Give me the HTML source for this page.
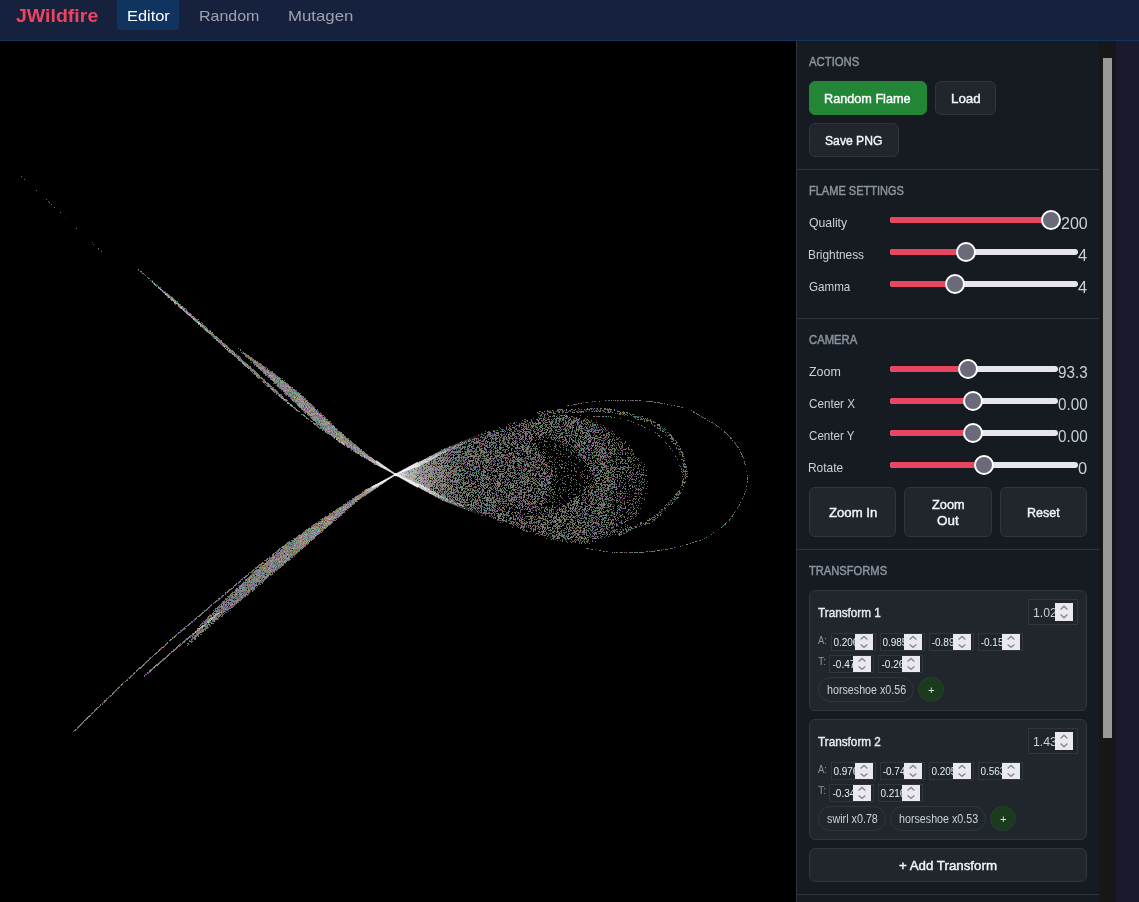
<!DOCTYPE html>
<html lang="en"><head><meta charset="utf-8"><title>JWildfire</title>
<style>
*{box-sizing:border-box;margin:0;padding:0}
html,body{width:1139px;height:902px;overflow:hidden;background:#1a1a2e;font-family:"Liberation Sans",sans-serif}
.abs{position:absolute}
#root{position:absolute;left:0;top:0;width:1139px;height:902px;overflow:hidden;will-change:transform}
#hdr{position:absolute;left:0;top:0;width:1139px;height:41px;background:#16213e;border-bottom:1px solid #0f3460}
#cv{position:absolute;left:0;top:41px;width:796px;height:861px;background:#000;overflow:hidden}
#panel{position:absolute;left:796px;top:41px;width:320px;height:861px;background:#161b22;border-left:1px solid #30363d;overflow:hidden}
#sbar{position:absolute;left:1099px;top:41px;width:17px;height:861px;background:#171717}
#sthumb{position:absolute;left:1103px;top:58px;width:9px;height:680px;background:#999}
.t{position:absolute;white-space:nowrap;line-height:1;transform-origin:0 0}
.hr{position:absolute;left:797px;width:302px;height:1px;background:#30363d}
.btn{position:absolute;background:#21262d;border:1px solid #30363d;border-radius:6px}
.card{position:absolute;left:809px;width:278px;height:121px;background:#21262d;border:1px solid #30363d;border-radius:6px}
.inp{position:absolute;border:1px solid #30363d;background:#20252c;overflow:hidden}
.spin{position:absolute;background:#eae9ef}
.chip{position:absolute;border:1px solid #30363d;border-radius:13px;background:#21262d}
.plus{position:absolute;border-radius:13px;background:#1b3a1e;border:1px solid #21422a}
.trk{position:absolute;height:6px;border-radius:3px}
.thumb{position:absolute;width:20px;height:20px;border-radius:10px;background:#6a6a7a;border:2px solid #fff}
</style></head>
<body>
<div id="root">
<div id="hdr"></div>
<div class="abs" style="left:117px;top:-2px;width:62px;height:32px;background:#0f3460;border-radius:4px"></div>
<span class="t" id="t0" style="left:15.56px;top:7.26px;font-size:18px;color:#e94560;font-weight:700;transform:scaleX(1.0841);">JWildfire</span>
<span class="t" id="t1" style="left:126.63px;top:8.10px;font-size:15px;color:#ffffff;font-weight:400;transform:scaleX(1.0926);">Editor</span>
<span class="t" id="t2" style="left:198.62px;top:8.10px;font-size:15px;color:#a0a0b0;font-weight:400;transform:scaleX(1.0660);">Random</span>
<span class="t" id="t3" style="left:287.89px;top:8.10px;font-size:15px;color:#a0a0b0;font-weight:400;transform:scaleX(1.1201);">Mutagen</span>
<div id="cv"><svg width="796" height="861" viewBox="0 41 796 861" style="position:absolute;left:0;top:0;display:block">
<defs>
<linearGradient id="bg" gradientUnits="userSpaceOnUse" x1="396" y1="0" x2="652" y2="0">
<stop offset="0" stop-color="#bcbcbc"/><stop offset="0.1" stop-color="#a0a0a0"/><stop offset="0.3" stop-color="#878787"/><stop offset="0.78" stop-color="#828282"/><stop offset="0.87" stop-color="#777777"/><stop offset="1" stop-color="#6b6b6b"/></linearGradient>
<linearGradient id="tu" gradientUnits="userSpaceOnUse" x1="396" y1="474.5" x2="360" y2="450">
<stop offset="0" stop-color="#fff"/><stop offset="0.4" stop-color="#ccc" stop-opacity="0.8"/><stop offset="1" stop-color="#999" stop-opacity="0"/></linearGradient>
<linearGradient id="tl" gradientUnits="userSpaceOnUse" x1="396" y1="474.5" x2="360" y2="497">
<stop offset="0" stop-color="#fff"/><stop offset="0.4" stop-color="#ccc" stop-opacity="0.8"/><stop offset="1" stop-color="#999" stop-opacity="0"/></linearGradient>
<linearGradient id="wu" gradientUnits="userSpaceOnUse" x1="396" y1="474.5" x2="231" y2="343">
<stop offset="0" stop-color="#e6e6e6"/><stop offset="0.3" stop-color="#d7d7d7"/><stop offset="1" stop-color="#c8c8c8"/></linearGradient>
<linearGradient id="wl" gradientUnits="userSpaceOnUse" x1="396" y1="474.5" x2="180" y2="653">
<stop offset="0" stop-color="#e0e0e0"/><stop offset="0.45" stop-color="#c8c8c8"/><stop offset="0.75" stop-color="#aaaaaa"/><stop offset="1" stop-color="#9a9a9a"/></linearGradient>
<radialGradient id="ap" gradientUnits="userSpaceOnUse" cx="396" cy="474.5" r="60">
<stop offset="0" stop-color="#fff" stop-opacity="0.95"/><stop offset="0.2" stop-color="#ddd" stop-opacity="0.5"/><stop offset="0.6" stop-color="#bbb" stop-opacity="0.18"/><stop offset="1" stop-color="#aaa" stop-opacity="0"/></radialGradient>
<linearGradient id="eu" gradientUnits="userSpaceOnUse" x1="396" y1="474.5" x2="485" y2="431.6">
<stop offset="0" stop-color="#fff" stop-opacity="1"/><stop offset="0.35" stop-color="#ddd" stop-opacity="0.75"/><stop offset="1" stop-color="#bbb" stop-opacity="0"/></linearGradient>
<linearGradient id="el" gradientUnits="userSpaceOnUse" x1="396" y1="474.5" x2="485" y2="519">
<stop offset="0" stop-color="#fff" stop-opacity="1"/><stop offset="0.35" stop-color="#ddd" stop-opacity="0.75"/><stop offset="1" stop-color="#bbb" stop-opacity="0"/></linearGradient>
<filter id="sp" filterUnits="userSpaceOnUse" x="0" y="41" width="796" height="861" color-interpolation-filters="sRGB">
<feGaussianBlur in="SourceGraphic" stdDeviation="1.9" result="d"/>
<feTurbulence type="fractalNoise" baseFrequency="1.37 1.73" numOctaves="1" seed="3" result="n"/>
<feColorMatrix in="n" type="matrix" values="1 0 0 0 0  1 0 0 0 0  1 0 0 0 0  0 0 0 0 1" result="n1"/>
<feComposite in="d" in2="n1" operator="arithmetic" k1="0" k2="1" k3="1" k4="-1" result="s"/>
<feComponentTransfer in="s" result="s2"><feFuncR type="table" tableValues="0 0.45 0.463 0.476 0.49 0.503 0.516 0.529 0.542 0.555 0.569 0.582 0.595 0.608 0.621 0.635 0.648 0.661 0.674 0.687 0.7 0.714 0.727 0.74 0.74 0.74 0.74 0.74 0.74 0.74 0.74 0.74 0.74 0.74 0.74 0.74 0.74 0.74 0.74 0.74 0.74"/><feFuncG type="table" tableValues="0 0.45 0.463 0.476 0.49 0.503 0.516 0.529 0.542 0.555 0.569 0.582 0.595 0.608 0.621 0.635 0.648 0.661 0.674 0.687 0.7 0.714 0.727 0.74 0.74 0.74 0.74 0.74 0.74 0.74 0.74 0.74 0.74 0.74 0.74 0.74 0.74 0.74 0.74 0.74 0.74"/><feFuncB type="table" tableValues="0 0.45 0.463 0.476 0.49 0.503 0.516 0.529 0.542 0.555 0.569 0.582 0.595 0.608 0.621 0.635 0.648 0.661 0.674 0.687 0.7 0.714 0.727 0.74 0.74 0.74 0.74 0.74 0.74 0.74 0.74 0.74 0.74 0.74 0.74 0.74 0.74 0.74 0.74 0.74 0.74"/></feComponentTransfer>
<feTurbulence type="fractalNoise" baseFrequency="0.93 1.21" numOctaves="1" seed="11" result="c"/>
<feColorMatrix in="c" type="matrix" values="2.8 0 0 0 -0.4  0 2.8 0 0 -0.4  0 0 2.8 0 -0.43000000000000005  0 0 0 0 1" result="c1"/>
<feComposite in="s2" in2="c1" operator="arithmetic" k1="1" k2="0" k3="0" k4="0"/>
</filter>
<filter id="sp2" filterUnits="userSpaceOnUse" x="0" y="41" width="796" height="861" color-interpolation-filters="sRGB">
<feTurbulence type="fractalNoise" baseFrequency="1.37 1.73" numOctaves="1" seed="8" result="n"/>
<feColorMatrix in="n" type="matrix" values="1 0 0 0 0  1 0 0 0 0  1 0 0 0 0  0 0 0 0 1" result="n1"/>
<feComposite in="SourceGraphic" in2="n1" operator="arithmetic" k1="0" k2="1" k3="1" k4="-1" result="s"/>
<feComponentTransfer in="s" result="s2"><feFuncR type="table" tableValues="0 0.45 0.463 0.476 0.49 0.503 0.516 0.529 0.542 0.555 0.569 0.582 0.595 0.608 0.621 0.635 0.648 0.661 0.674 0.687 0.7 0.714 0.727 0.74 0.74 0.74 0.74 0.74 0.74 0.74 0.74 0.74 0.74 0.74 0.74 0.74 0.74 0.74 0.74 0.74 0.74"/><feFuncG type="table" tableValues="0 0.45 0.463 0.476 0.49 0.503 0.516 0.529 0.542 0.555 0.569 0.582 0.595 0.608 0.621 0.635 0.648 0.661 0.674 0.687 0.7 0.714 0.727 0.74 0.74 0.74 0.74 0.74 0.74 0.74 0.74 0.74 0.74 0.74 0.74 0.74 0.74 0.74 0.74 0.74 0.74"/><feFuncB type="table" tableValues="0 0.45 0.463 0.476 0.49 0.503 0.516 0.529 0.542 0.555 0.569 0.582 0.595 0.608 0.621 0.635 0.648 0.661 0.674 0.687 0.7 0.714 0.727 0.74 0.74 0.74 0.74 0.74 0.74 0.74 0.74 0.74 0.74 0.74 0.74 0.74 0.74 0.74 0.74 0.74 0.74"/></feComponentTransfer>
<feTurbulence type="fractalNoise" baseFrequency="0.93 1.21" numOctaves="1" seed="5" result="c"/>
<feColorMatrix in="c" type="matrix" values="2.8 0 0 0 -0.4  0 2.8 0 0 -0.4  0 0 2.8 0 -0.43000000000000005  0 0 0 0 1" result="c1"/>
<feComposite in="s2" in2="c1" operator="arithmetic" k1="1" k2="0" k3="0" k4="0"/>
</filter>
<filter id="sp3" filterUnits="userSpaceOnUse" x="0" y="41" width="796" height="861" color-interpolation-filters="sRGB">
<feGaussianBlur in="SourceGraphic" stdDeviation="1.1" result="d"/>
<feTurbulence type="fractalNoise" baseFrequency="1.37 1.73" numOctaves="1" seed="21" result="n"/>
<feColorMatrix in="n" type="matrix" values="1 0 0 0 0  1 0 0 0 0  1 0 0 0 0  0 0 0 0 1" result="n1"/>
<feComposite in="d" in2="n1" operator="arithmetic" k1="0" k2="1" k3="1" k4="-1" result="s"/>
<feComponentTransfer in="s" result="s2"><feFuncR type="table" tableValues="0 0.45 0.463 0.476 0.49 0.503 0.516 0.529 0.542 0.555 0.569 0.582 0.595 0.608 0.621 0.635 0.648 0.661 0.674 0.687 0.7 0.714 0.727 0.74 0.74 0.74 0.74 0.74 0.74 0.74 0.74 0.74 0.74 0.74 0.74 0.74 0.74 0.74 0.74 0.74 0.74"/><feFuncG type="table" tableValues="0 0.45 0.463 0.476 0.49 0.503 0.516 0.529 0.542 0.555 0.569 0.582 0.595 0.608 0.621 0.635 0.648 0.661 0.674 0.687 0.7 0.714 0.727 0.74 0.74 0.74 0.74 0.74 0.74 0.74 0.74 0.74 0.74 0.74 0.74 0.74 0.74 0.74 0.74 0.74 0.74"/><feFuncB type="table" tableValues="0 0.45 0.463 0.476 0.49 0.503 0.516 0.529 0.542 0.555 0.569 0.582 0.595 0.608 0.621 0.635 0.648 0.661 0.674 0.687 0.7 0.714 0.727 0.74 0.74 0.74 0.74 0.74 0.74 0.74 0.74 0.74 0.74 0.74 0.74 0.74 0.74 0.74 0.74 0.74 0.74"/></feComponentTransfer>
<feTurbulence type="fractalNoise" baseFrequency="0.93 1.21" numOctaves="1" seed="17" result="c"/>
<feColorMatrix in="c" type="matrix" values="2.8 0 0 0 -0.4  0 2.8 0 0 -0.4  0 0 2.8 0 -0.43000000000000005  0 0 0 0 1" result="c1"/>
<feComposite in="s2" in2="c1" operator="arithmetic" k1="1" k2="0" k3="0" k4="0"/>
</filter>
</defs>
<g filter="url(#sp)">
<rect x="0" y="41" width="796" height="861" fill="#000"/>
<path d="M394 474.5 L420 460.4 L443 448.2 L485 430.4 L527.5 417.8 L548 413.6 L566 412.6 L596 419 L615 430.6 L634 448 L647.7 467.3 L650.6 486.6 L646.7 506 L634 523.3 L615 536.8 L586 545.6 L557 542.6 L528 533.2 L499 523.2 L470 511.8 L443 502 L420 489.4 Z" fill="url(#bg)"/>
<path d="M572.0 424.0 C573.3 423.3 591.2 432.7 598.0 440.0 C604.8 447.3 610.7 458.7 613.0 468.0 C615.3 477.3 614.5 487.0 612.0 496.0 C609.5 505.0 603.7 514.7 598.0 522.0 C592.3 529.3 579.0 540.7 578.0 540.0 C577.0 539.3 588.3 525.7 592.0 518.0 C595.7 510.3 598.7 502.0 600.0 494.0 C601.3 486.0 601.7 478.3 600.0 470.0 C598.3 461.7 594.7 451.7 590.0 444.0 C585.3 436.3 570.7 424.7 572.0 424.0Z" fill="#898989"/>
<path d="M533.0 440.0 C534.3 436.5 550.5 438.5 558.0 441.0 C565.5 443.5 572.5 448.3 578.0 455.0 C583.5 461.7 591.7 473.5 591.0 481.0 C590.3 488.5 581.7 495.2 574.0 500.0 C566.3 504.8 548.7 512.0 545.0 510.0 C541.3 508.0 551.2 496.0 552.0 488.0 C552.8 480.0 553.2 470.0 550.0 462.0 C546.8 454.0 531.7 443.5 533.0 440.0Z" fill="#656565"/>
<path d="M498.0 503.0 C498.0 501.7 512.2 508.2 520.0 509.0 C527.8 509.8 538.0 509.7 545.0 508.0 C552.0 506.3 561.5 498.2 562.0 499.0 C562.5 499.8 555.0 510.0 548.0 513.0 C541.0 516.0 528.3 518.7 520.0 517.0 C511.7 515.3 498.0 504.3 498.0 503.0Z" fill="#707070"/>
</g>
<g filter="url(#sp2)" style="mix-blend-mode:screen">
<rect x="0" y="41" width="796" height="861" fill="#000"/>
<path d="M537.0 414.0 C540.8 413.6 549.5 412.3 560.0 411.6 C570.5 410.9 590.2 409.9 600.0 410.0 C609.8 410.1 611.8 411.0 618.9 412.4 C626.0 413.8 636.1 416.5 642.4 418.6 C648.7 420.7 651.9 422.1 656.6 425.2 C661.3 428.3 666.8 433.0 670.7 437.4 C674.6 441.8 677.8 446.4 680.1 451.6 C682.5 456.8 683.9 464.1 684.8 468.5 C685.7 472.9 685.8 475.2 685.5 478.0 C685.2 480.8 684.1 482.2 682.8 485.0 C681.5 487.8 679.9 491.9 677.8 495.0 C675.6 498.1 672.9 500.8 669.9 503.9 C666.9 507.0 663.6 510.9 659.9 513.9 C656.2 516.9 652.1 519.7 647.9 521.9 C643.7 524.1 639.9 524.9 634.9 526.9 C629.9 528.9 620.8 532.8 618.0 534.0" fill="none" stroke="#7f7f7f" stroke-width="5"/>
<path d="M565.0 406.4 C569.2 405.7 580.0 403.0 590.0 402.0 C600.0 401.0 615.0 400.5 625.0 400.4 C635.0 400.3 640.0 400.2 650.0 401.5 C660.0 402.8 676.6 405.9 684.8 408.2 C693.0 410.5 693.5 412.0 699.4 415.3 C705.3 418.6 714.1 423.4 720.0 428.0 C725.9 432.6 731.0 437.7 735.0 443.0 C739.0 448.3 741.9 454.7 744.0 460.0 C746.1 465.3 747.1 470.0 747.4 475.0 C747.7 480.0 747.1 485.5 746.0 490.0 C744.9 494.5 743.9 496.8 741.0 502.0 C738.1 507.2 734.2 515.2 728.6 521.0 C723.0 526.8 712.8 533.6 707.5 537.0 C702.2 540.4 703.1 539.4 696.8 541.4 C690.5 543.4 678.9 547.0 669.9 548.8 C660.9 550.6 652.4 551.7 642.9 552.3 C633.4 552.9 622.5 552.9 613.0 552.3 C603.5 551.7 590.5 549.1 586.0 548.5" fill="none" stroke="#8c8c8c" stroke-width="1.4"/>
<path d="M560.0 415.8 C566.7 415.9 590.2 415.8 600.0 416.2 C609.8 416.6 612.6 416.8 618.9 418.1 C625.2 419.4 631.4 421.6 637.7 424.2 C644.0 426.8 651.4 430.0 656.6 433.6 C661.8 437.2 665.7 442.3 668.8 445.9 C671.9 449.5 673.4 451.6 675.4 455.3 C677.4 459.0 679.7 464.2 681.0 468.0 C682.3 471.8 682.7 476.3 683.0 478.0" fill="none" stroke="#848484" stroke-width="1.4"/>
<path d="M138.2 269.1 L200 325 L238.5 359.6 L280 397 L320 428 L345 445" fill="none" stroke="#969696" stroke-width="1.7"/>
<path d="M143.9 676.5 L180 645 L219 612.7" fill="none" stroke="#acacac" stroke-width="2.2"/>
<path d="M73.4 731.9 L120 686.4 L170.7 640 L219 599 L253.5 570 L290 541" fill="none" stroke="#a5a5a5" stroke-width="1.9"/>
<path d="M20 175 L104 254" fill="none" stroke="#707070" stroke-width="1.5"/>
</g>
<g filter="url(#sp3)" style="mix-blend-mode:screen">
<rect x="0" y="41" width="796" height="861" fill="#000"/>
<path d="M231.5 343.5 L252 357 L280 377 L300 393 L320 412 L340 431 L360 448 L380 464 L395.5 474.6 L380 467 L360 456 L340 443 L320 427 L300 408.5 L270 380 Z" fill="url(#wu)"/>
<path d="M137.5 268.4 L170 295.2 L210 330 L250 366 L290 402.6 L322 430.5 L290 405.8 L250 370 L210 334.6 L170 299.4 Z" fill="#ebebeb"/>
<path d="M395.4 474.8 L367.6 488.0 L345.5 503 L323.3 517.5 L301.1 533 L290 541 L253.5 571 L220 603 L200 624 L180.1 653.5 L220 619 L253.5 591 L290 560.3 L323.3 531.4 L356.5 502.6 Z" fill="url(#wl)"/>
</g>
<g style="mix-blend-mode:screen">
<path d="M395.7 474.7 L380 464 L360 448 L360 456 L380 467 Z" fill="url(#tu)"/>
<path d="M395.4 474.8 L367.6 488.8 L356 496.5 L356.5 502.6 Z" fill="url(#tl)"/>
<path d="M396 474.5 L420 461.6 L443 449.5 L460 442.2 L460 501 L443 500.8 L420 488.2 Z" fill="url(#ap)"/>
<path d="M396 474.5 L420 461.6 L443 449.5 L485 431.6 L485 434.6 L443 453.5 L420 466 Z" fill="url(#eu)"/>
<path d="M396 474.5 L420 488.2 L443 500.8 L485 517.5 L485 514.5 L443 496.8 L420 484 Z" fill="url(#el)"/>
<path d="M376 461 L395.6 474.6 L372 487.5 M418 462.6 L395.6 474.6 L418 487" fill="none" stroke="#fff" stroke-width="1.7" stroke-linejoin="round" opacity="0.8"/>
<circle cx="395.6" cy="474.6" r="1.6" fill="#fff"/>
</g>
</svg></div>
<div id="panel"></div><div id="sbar"></div><div id="sthumb"></div>
<span class="t" id="t4" style="left:809.49px;top:56.04px;font-size:12px;color:#8b949e;font-weight:400;transform:scaleX(0.9432);-webkit-text-stroke:0.45px #8b949e;">ACTIONS</span>
<span class="t" id="t5" style="left:809.11px;top:185.04px;font-size:12px;color:#8b949e;font-weight:400;transform:scaleX(0.9179);-webkit-text-stroke:0.45px #8b949e;">FLAME SETTINGS</span>
<span class="t" id="t6" style="left:809.34px;top:334.04px;font-size:12px;color:#8b949e;font-weight:400;transform:scaleX(0.9379);-webkit-text-stroke:0.45px #8b949e;">CAMERA</span>
<span class="t" id="t7" style="left:808.99px;top:565.04px;font-size:12px;color:#8b949e;font-weight:400;transform:scaleX(0.9295);-webkit-text-stroke:0.45px #8b949e;">TRANSFORMS</span>
<div class="hr" style="top:169px"></div>
<div class="hr" style="top:318px"></div>
<div class="hr" style="top:549px"></div>
<div class="hr" style="top:894px"></div>
<div class="btn" style="left:809px;top:81px;width:118px;height:34px;background:#238636;border-color:#238636;"></div>
<div class="btn" style="left:935px;top:81px;width:61px;height:34px;"></div>
<div class="btn" style="left:809px;top:123px;width:90px;height:34px;"></div>
<span class="t" id="t8" style="left:824.35px;top:91.60px;font-size:13px;color:#ffffff;font-weight:400;transform:scaleX(0.9742);-webkit-text-stroke:0.4px;">Random Flame</span>
<span class="t" id="t9" style="left:950.50px;top:91.60px;font-size:13px;color:#f0f6fc;font-weight:400;transform:scaleX(1.0282);-webkit-text-stroke:0.4px;">Load</span>
<span class="t" id="t10" style="left:824.67px;top:133.60px;font-size:13px;color:#f0f6fc;font-weight:400;transform:scaleX(0.9356);-webkit-text-stroke:0.4px;">Save PNG</span>
<span class="t" id="t11" style="left:808.97px;top:216.00px;font-size:13px;color:#c9d1d9;font-weight:400;transform:scaleX(0.9430);">Quality</span>
<div class="trk" style="left:889.5px;top:217px;width:168.5px;background:#e6e6ec"></div>
<div class="trk" style="left:889.5px;top:217px;width:161.5px;background:#e94560"></div>
<div class="thumb" style="left:1041px;top:210px"></div>
<span class="t" id="t12" style="left:1060.71px;top:215.89px;font-size:15.6px;color:#c9d1d9;font-weight:400;transform:scaleX(1.0300);">200</span>
<span class="t" id="t13" style="left:808.30px;top:248.00px;font-size:13px;color:#c9d1d9;font-weight:400;transform:scaleX(0.9123);">Brightness</span>
<div class="trk" style="left:889.5px;top:249px;width:188.5px;background:#e6e6ec"></div>
<div class="trk" style="left:889.5px;top:249px;width:76.20000000000005px;background:#e94560"></div>
<div class="thumb" style="left:955.7px;top:242px"></div>
<span class="t" id="t14" style="left:1078.42px;top:247.89px;font-size:15.6px;color:#c9d1d9;font-weight:400;transform:scaleX(1.0500);">4</span>
<span class="t" id="t15" style="left:808.91px;top:280.00px;font-size:13px;color:#c9d1d9;font-weight:400;transform:scaleX(0.8938);">Gamma</span>
<div class="trk" style="left:889.5px;top:281px;width:188.5px;background:#e6e6ec"></div>
<div class="trk" style="left:889.5px;top:281px;width:65.20000000000005px;background:#e94560"></div>
<div class="thumb" style="left:944.7px;top:274px"></div>
<span class="t" id="t16" style="left:1078.42px;top:279.89px;font-size:15.6px;color:#c9d1d9;font-weight:400;transform:scaleX(1.0500);">4</span>
<span class="t" id="t17" style="left:808.76px;top:365.00px;font-size:13px;color:#c9d1d9;font-weight:400;transform:scaleX(0.9576);">Zoom</span>
<div class="trk" style="left:889.5px;top:366px;width:168.0px;background:#e6e6ec"></div>
<div class="trk" style="left:889.5px;top:366px;width:78.20000000000005px;background:#e94560"></div>
<div class="thumb" style="left:957.7px;top:359px"></div>
<span class="t" id="t18" style="left:1057.82px;top:364.89px;font-size:15.6px;color:#c9d1d9;font-weight:400;transform:scaleX(0.9770);">93.3</span>
<span class="t" id="t19" style="left:808.88px;top:397.00px;font-size:13px;color:#c9d1d9;font-weight:400;transform:scaleX(0.8971);">Center X</span>
<div class="trk" style="left:889.5px;top:398px;width:168.0px;background:#e6e6ec"></div>
<div class="trk" style="left:889.5px;top:398px;width:83.20000000000005px;background:#e94560"></div>
<div class="thumb" style="left:962.7px;top:391px"></div>
<span class="t" id="t20" style="left:1057.82px;top:396.89px;font-size:15.6px;color:#c9d1d9;font-weight:400;transform:scaleX(0.9770);">0.00</span>
<span class="t" id="t21" style="left:808.91px;top:429.00px;font-size:13px;color:#c9d1d9;font-weight:400;transform:scaleX(0.8929);">Center Y</span>
<div class="trk" style="left:889.5px;top:430px;width:168.0px;background:#e6e6ec"></div>
<div class="trk" style="left:889.5px;top:430px;width:83.20000000000005px;background:#e94560"></div>
<div class="thumb" style="left:962.7px;top:423px"></div>
<span class="t" id="t22" style="left:1057.82px;top:428.89px;font-size:15.6px;color:#c9d1d9;font-weight:400;transform:scaleX(0.9770);">0.00</span>
<span class="t" id="t23" style="left:808.30px;top:461.00px;font-size:13px;color:#c9d1d9;font-weight:400;transform:scaleX(0.9187);">Rotate</span>
<div class="trk" style="left:889.5px;top:462px;width:188.5px;background:#e6e6ec"></div>
<div class="trk" style="left:889.5px;top:462px;width:94.20000000000005px;background:#e94560"></div>
<div class="thumb" style="left:973.7px;top:455px"></div>
<span class="t" id="t24" style="left:1078.42px;top:460.89px;font-size:15.6px;color:#c9d1d9;font-weight:400;transform:scaleX(1.0500);">0</span>
<div class="btn" style="left:809px;top:487px;width:87px;height:50px;"></div>
<div class="btn" style="left:904.4px;top:487px;width:87.4px;height:50px;"></div>
<div class="btn" style="left:1000px;top:487px;width:87px;height:50px;"></div>
<span class="t" id="t25" style="left:828.86px;top:505.50px;font-size:13px;color:#f0f6fc;font-weight:400;transform:scaleX(1.0121);-webkit-text-stroke:0.4px;">Zoom In</span>
<span class="t" id="t26" style="left:932.06px;top:497.60px;font-size:13px;color:#f0f6fc;font-weight:400;transform:scaleX(0.9816);-webkit-text-stroke:0.4px;">Zoom</span>
<span class="t" id="t27" style="left:936.99px;top:513.60px;font-size:13px;color:#f0f6fc;font-weight:400;transform:scaleX(1.0317);-webkit-text-stroke:0.4px;">Out</span>
<span class="t" id="t28" style="left:1026.85px;top:505.50px;font-size:13px;color:#f0f6fc;font-weight:400;transform:scaleX(0.9609);-webkit-text-stroke:0.4px;">Reset</span>
<div class="card" style="top:590px"></div>
<span class="t" id="t29" style="left:818.27px;top:606.10px;font-size:13px;color:#e6edf3;font-weight:400;transform:scaleX(0.9020);-webkit-text-stroke:0.4px;">Transform 1</span>
<div class="inp" style="left:1028px;top:599px;width:50px;height:26px"></div>
<span class="t" id="t30" style="left:1033.20px;top:605.90px;font-size:13px;color:#c9d1d9;font-weight:400;transform:scaleX(0.9470);clip-path:inset(-5px 9.5px -5px 0)">1.025</span>
<div class="spin" style="left:1055px;top:603px;width:18px;height:18px"><svg width="18" height="18" viewBox="0 0 18 18" style="display:block"><path d="M5.6 6.4L9.0 3.2L12.4 6.4M5.6 11.5L9.0 14.7L12.4 11.5" fill="none" stroke="#878793" stroke-width="1.35"/></svg></div>
<span class="t" id="t31" style="left:818.24px;top:635.74px;font-size:10px;color:#8b949e;font-weight:400;transform:scaleX(0.9472);">A:</span>
<span class="t" id="t32" style="left:818.43px;top:657.43px;font-size:10px;color:#8b949e;font-weight:400;transform:scaleX(1.0490);">T:</span>
<div class="inp" style="left:831px;top:633px;width:45px;height:18px"></div>
<span class="t" id="t33" style="left:833.40px;top:637.53px;font-size:10px;color:#e6edf3;font-weight:400;transform:scaleX(1.0000);clip-path:inset(-5px 9.0px -5px 0)">0.2061</span>
<div class="spin" style="left:855px;top:634px;width:18px;height:16px"><svg width="18" height="16" viewBox="0 0 18 16" style="display:block"><path d="M5.6 5.6L9.0 2.5L12.4 5.6M5.6 10.5L9.0 13.3L12.4 10.5" fill="none" stroke="#878793" stroke-width="1.35"/></svg></div>
<div class="inp" style="left:880px;top:633px;width:45px;height:18px"></div>
<span class="t" id="t34" style="left:882.40px;top:637.53px;font-size:10px;color:#e6edf3;font-weight:400;transform:scaleX(1.0000);clip-path:inset(-5px 9.0px -5px 0)">0.9853</span>
<div class="spin" style="left:904px;top:634px;width:18px;height:16px"><svg width="18" height="16" viewBox="0 0 18 16" style="display:block"><path d="M5.6 5.6L9.0 2.5L12.4 5.6M5.6 10.5L9.0 13.3L12.4 10.5" fill="none" stroke="#878793" stroke-width="1.35"/></svg></div>
<div class="inp" style="left:929px;top:633px;width:45px;height:18px"></div>
<span class="t" id="t35" style="left:931.70px;top:637.53px;font-size:10px;color:#e6edf3;font-weight:400;transform:scaleX(1.0000);clip-path:inset(-5px 12.6px -5px 0)">-0.8951</span>
<div class="spin" style="left:953px;top:634px;width:18px;height:16px"><svg width="18" height="16" viewBox="0 0 18 16" style="display:block"><path d="M5.6 5.6L9.0 2.5L12.4 5.6M5.6 10.5L9.0 13.3L12.4 10.5" fill="none" stroke="#878793" stroke-width="1.35"/></svg></div>
<div class="inp" style="left:978px;top:633px;width:45px;height:18px"></div>
<span class="t" id="t36" style="left:980.70px;top:637.53px;font-size:10px;color:#e6edf3;font-weight:400;transform:scaleX(1.0000);clip-path:inset(-5px 12.6px -5px 0)">-0.1537</span>
<div class="spin" style="left:1002px;top:634px;width:18px;height:16px"><svg width="18" height="16" viewBox="0 0 18 16" style="display:block"><path d="M5.6 5.6L9.0 2.5L12.4 5.6M5.6 10.5L9.0 13.3L12.4 10.5" fill="none" stroke="#878793" stroke-width="1.35"/></svg></div>
<div class="inp" style="left:829px;top:655px;width:45px;height:18px"></div>
<span class="t" id="t37" style="left:832.50px;top:659.53px;font-size:10px;color:#e6edf3;font-weight:400;transform:scaleX(1.0000);clip-path:inset(-5px 13.4px -5px 0)">-0.4731</span>
<div class="spin" style="left:853px;top:656px;width:18px;height:16px"><svg width="18" height="16" viewBox="0 0 18 16" style="display:block"><path d="M5.6 5.6L9.0 2.5L12.4 5.6M5.6 10.5L9.0 13.3L12.4 10.5" fill="none" stroke="#878793" stroke-width="1.35"/></svg></div>
<div class="inp" style="left:878px;top:655px;width:45px;height:18px"></div>
<span class="t" id="t38" style="left:881.50px;top:659.53px;font-size:10px;color:#e6edf3;font-weight:400;transform:scaleX(1.0000);clip-path:inset(-5px 13.4px -5px 0)">-0.2648</span>
<div class="spin" style="left:902px;top:656px;width:18px;height:16px"><svg width="18" height="16" viewBox="0 0 18 16" style="display:block"><path d="M5.6 5.6L9.0 2.5L12.4 5.6M5.6 10.5L9.0 13.3L12.4 10.5" fill="none" stroke="#878793" stroke-width="1.35"/></svg></div>
<div class="chip" style="left:818.3px;top:677.4px;width:95.7px;height:24.6px"></div>
<span class="t" id="t39" style="left:826.91px;top:683.94px;font-size:12px;color:#c9d1d9;font-weight:400;transform:scaleX(0.8929);">horseshoe x0.56</span>
<div class="plus" style="left:918.4px;top:677.4px;width:25.4px;height:24.6px"></div>
<span class="t" id="t40" style="left:927.79px;top:685.53px;font-size:10px;color:#d0e6d0;font-weight:400;transform:scaleX(1.1313);">+</span>
<div class="card" style="top:719px"></div>
<span class="t" id="t41" style="left:818.27px;top:735.10px;font-size:13px;color:#e6edf3;font-weight:400;transform:scaleX(0.9037);-webkit-text-stroke:0.4px;">Transform 2</span>
<div class="inp" style="left:1028px;top:728px;width:50px;height:26px"></div>
<span class="t" id="t42" style="left:1033.20px;top:734.90px;font-size:13px;color:#c9d1d9;font-weight:400;transform:scaleX(0.9470);clip-path:inset(-5px 9.5px -5px 0)">1.437</span>
<div class="spin" style="left:1055px;top:732px;width:18px;height:18px"><svg width="18" height="18" viewBox="0 0 18 18" style="display:block"><path d="M5.6 6.4L9.0 3.2L12.4 6.4M5.6 11.5L9.0 14.7L12.4 11.5" fill="none" stroke="#878793" stroke-width="1.35"/></svg></div>
<span class="t" id="t43" style="left:818.24px;top:764.74px;font-size:10px;color:#8b949e;font-weight:400;transform:scaleX(0.9472);">A:</span>
<span class="t" id="t44" style="left:818.43px;top:786.43px;font-size:10px;color:#8b949e;font-weight:400;transform:scaleX(1.0490);">T:</span>
<div class="inp" style="left:831px;top:762px;width:45px;height:18px"></div>
<span class="t" id="t45" style="left:833.40px;top:766.53px;font-size:10px;color:#e6edf3;font-weight:400;transform:scaleX(1.0000);clip-path:inset(-5px 9.0px -5px 0)">0.9762</span>
<div class="spin" style="left:855px;top:763px;width:18px;height:16px"><svg width="18" height="16" viewBox="0 0 18 16" style="display:block"><path d="M5.6 5.6L9.0 2.5L12.4 5.6M5.6 10.5L9.0 13.3L12.4 10.5" fill="none" stroke="#878793" stroke-width="1.35"/></svg></div>
<div class="inp" style="left:880px;top:762px;width:45px;height:18px"></div>
<span class="t" id="t46" style="left:882.70px;top:766.53px;font-size:10px;color:#e6edf3;font-weight:400;transform:scaleX(1.0000);clip-path:inset(-5px 12.6px -5px 0)">-0.7431</span>
<div class="spin" style="left:904px;top:763px;width:18px;height:16px"><svg width="18" height="16" viewBox="0 0 18 16" style="display:block"><path d="M5.6 5.6L9.0 2.5L12.4 5.6M5.6 10.5L9.0 13.3L12.4 10.5" fill="none" stroke="#878793" stroke-width="1.35"/></svg></div>
<div class="inp" style="left:929px;top:762px;width:45px;height:18px"></div>
<span class="t" id="t47" style="left:931.40px;top:766.53px;font-size:10px;color:#e6edf3;font-weight:400;transform:scaleX(1.0000);clip-path:inset(-5px 9.0px -5px 0)">0.2053</span>
<div class="spin" style="left:953px;top:763px;width:18px;height:16px"><svg width="18" height="16" viewBox="0 0 18 16" style="display:block"><path d="M5.6 5.6L9.0 2.5L12.4 5.6M5.6 10.5L9.0 13.3L12.4 10.5" fill="none" stroke="#878793" stroke-width="1.35"/></svg></div>
<div class="inp" style="left:978px;top:762px;width:45px;height:18px"></div>
<span class="t" id="t48" style="left:980.40px;top:766.53px;font-size:10px;color:#e6edf3;font-weight:400;transform:scaleX(1.0000);clip-path:inset(-5px 9.0px -5px 0)">0.5632</span>
<div class="spin" style="left:1002px;top:763px;width:18px;height:16px"><svg width="18" height="16" viewBox="0 0 18 16" style="display:block"><path d="M5.6 5.6L9.0 2.5L12.4 5.6M5.6 10.5L9.0 13.3L12.4 10.5" fill="none" stroke="#878793" stroke-width="1.35"/></svg></div>
<div class="inp" style="left:829px;top:784px;width:45px;height:18px"></div>
<span class="t" id="t49" style="left:832.50px;top:788.53px;font-size:10px;color:#e6edf3;font-weight:400;transform:scaleX(1.0000);clip-path:inset(-5px 13.4px -5px 0)">-0.3462</span>
<div class="spin" style="left:853px;top:785px;width:18px;height:16px"><svg width="18" height="16" viewBox="0 0 18 16" style="display:block"><path d="M5.6 5.6L9.0 2.5L12.4 5.6M5.6 10.5L9.0 13.3L12.4 10.5" fill="none" stroke="#878793" stroke-width="1.35"/></svg></div>
<div class="inp" style="left:878px;top:784px;width:45px;height:18px"></div>
<span class="t" id="t50" style="left:880.40px;top:788.53px;font-size:10px;color:#e6edf3;font-weight:400;transform:scaleX(1.0000);clip-path:inset(-5px 9.0px -5px 0)">0.2167</span>
<div class="spin" style="left:902px;top:785px;width:18px;height:16px"><svg width="18" height="16" viewBox="0 0 18 16" style="display:block"><path d="M5.6 5.6L9.0 2.5L12.4 5.6M5.6 10.5L9.0 13.3L12.4 10.5" fill="none" stroke="#878793" stroke-width="1.35"/></svg></div>
<div class="chip" style="left:818.3px;top:806.4px;width:67.5px;height:24.6px"></div>
<span class="t" id="t51" style="left:827.42px;top:812.94px;font-size:12px;color:#c9d1d9;font-weight:400;transform:scaleX(0.8972);">swirl x0.78</span>
<div class="chip" style="left:890.1999999999999px;top:806.4px;width:95.7px;height:24.6px"></div>
<span class="t" id="t52" style="left:898.56px;top:812.94px;font-size:12px;color:#c9d1d9;font-weight:400;transform:scaleX(0.8928);">horseshoe x0.53</span>
<div class="plus" style="left:990.3px;top:806.4px;width:25.4px;height:24.6px"></div>
<span class="t" id="t53" style="left:999.64px;top:814.53px;font-size:10px;color:#d0e6d0;font-weight:400;transform:scaleX(1.1313);">+</span>
<div class="btn" style="left:809px;top:848px;width:278px;height:34px;"></div>
<span class="t" id="t54" style="left:899.40px;top:858.60px;font-size:13px;color:#f0f6fc;font-weight:400;transform:scaleX(1.0232);-webkit-text-stroke:0.4px;">+ Add Transform</span>
</div>
</body></html>
